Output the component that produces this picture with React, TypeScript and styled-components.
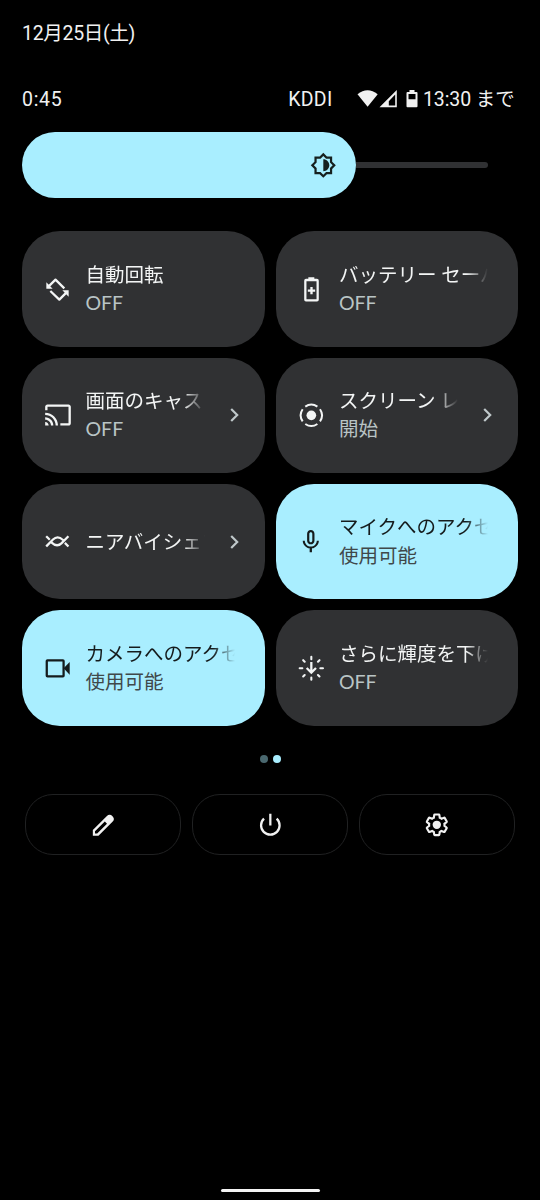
import React from 'react';
import styled, { createGlobalStyle } from 'styled-components';

const GlobalStyle = createGlobalStyle`
  * { box-sizing: border-box; }
  body { margin: 0; background: #000; }
`;

const Screen = styled.main`
  display: flex;
  flex-direction: column;
  width: 540px;
  height: 1200px;
  padding: 0 22px;
  overflow: hidden;
  background: #000;
  color: #f1f1f1;
  font-family: Roboto, 'Noto Sans CJK JP', sans-serif;
  font-size: 19.5px;
  line-height: 28px;
  white-space: nowrap;
`;

const DateLine = styled.div`
  margin-top: 20px;
  height: 28px;
  letter-spacing: -0.3px;
`;

const StatusBar = styled.div`
  display: flex;
  align-items: center;
  height: 28px;
  margin-top: 37px;
  padding-right: 4px;
`;

const Clock = styled.span`
  flex: 1;
  padding-top: 2px;
  letter-spacing: 0.7px;
`;

const Carrier = styled.span`
  margin-right: 24.5px;
  padding-top: 2px;
  letter-spacing: 0.3px;
`;

const StatusIcons = styled.svg`
  width: 62px;
  height: 20px;
  margin-right: 4px;
`;

const BatteryTime = styled.span`
  width: 91px;
  padding-top: 2px;
  letter-spacing: -0.1px;
`;

const Slider = styled.div`
  display: flex;
  align-items: center;
  height: 66px;
  margin-top: 19px;
  padding-right: 30px;
`;

const SliderFill = styled.div`
  display: flex;
  align-items: center;
  justify-content: flex-end;
  width: 334px;
  height: 66px;
  padding-right: 19px;
  border-radius: 33px;
  background: #a9eeff;
  color: #16201f;
`;

const SliderTrack = styled.div`
  flex: 1;
  height: 6px;
  border-radius: 0 3px 3px 0;
  background: #303133;
`;

const Tiles = styled.section`
  display: grid;
  grid-template-columns: repeat(2, minmax(0, 1fr));
  grid-auto-rows: 115.4px;
  gap: 11px;
  margin-top: 33.3px;
`;

const Tile = styled.div<{ $active?: boolean; $chevron?: boolean }>`
  display: flex;
  align-items: center;
  padding-left: 21.5px;
  padding-right: ${p => (p.$chevron ? 26 : 30)}px;
  border-radius: 38px;
  background: ${p => (p.$active ? '#a9eeff' : '#303133')};
  color: ${p => (p.$active ? '#151b1c' : '#f3f5f5')};
`;

const Labels = styled.div`
  flex: 1;
  min-width: 0;
  margin-left: 14px;
  padding-top: 2.6px;
`;

const Title = styled.div`
  overflow: hidden;
  line-height: 28.6px;
  mask-image: linear-gradient(to right, #000 calc(100% - 22px), transparent);
`;

const State = styled.div<{ $active?: boolean }>`
  margin-top: -1.2px;
  padding-bottom: 2.2px;
  color: ${p => (p.$active ? '#40484a' : '#b9c4c5')};
  font-family: Lato, 'Noto Sans CJK JP', sans-serif;
  line-height: 27.6px;
`;

const Chevron = styled.svg`
  width: 9px;
  height: 16px;
  margin-left: 25px;
  color: #bfc8ca;
`;

const Dots = styled.div`
  display: flex;
  justify-content: center;
  gap: 5px;
  margin-top: 28.7px;
`;

const Dot = styled.span<{ $on?: boolean }>`
  width: 8px;
  height: 8px;
  border-radius: 50%;
  background: ${p => (p.$on ? '#a9eeff' : '#4a686f')};
`;

const Actions = styled.footer`
  display: grid;
  grid-template-columns: repeat(3, 1fr);
  gap: 11px;
  margin: 31.9px 3px 0;
`;

const Action = styled.button`
  display: flex;
  align-items: center;
  justify-content: center;
  height: 61px;
  padding: 0;
  border: 1.4px solid #202122;
  border-radius: 28px;
  background: none;
  color: #f1f1f1;
`;

const HomeBar = styled.div`
  align-self: center;
  width: 99px;
  height: 3px;
  margin-top: auto;
  margin-bottom: 8.5px;
  border-radius: 2px;
  background: #f4f4f4;
`;

const IconSvg = styled.svg<{ $size: number }>`
  flex: none;
  width: ${p => p.$size}px;
  height: ${p => p.$size}px;
  margin: 0 ${p => (28 - p.$size) / 2}px;
`;

type Kids = { children: React.ReactNode };

/* Line icons share an 80-unit grid; solid icons use the 24-unit Material grid. */
const Line = ({ children }: Kids) => (
  <IconSvg $size={26.67} viewBox="0 0 80 80" fill="none" stroke="currentColor" strokeWidth="6.8">
    {children}
  </IconSvg>
);
const Solid = ({ size, children }: Kids & { size: number }) => (
  <IconSvg $size={size} viewBox="0 0 24 24" fill="currentColor">
    {children}
  </IconSvg>
);

const BrightnessIcon = () => (
  <Solid size={26.6}>
    <path d="M20 15.31 23.31 12 20 8.69V4h-4.69L12 .69 8.69 4H4v4.69L.69 12 4 15.31V20h4.69L12 23.31 15.31 20H20zM18 14.48V18h-3.52L12 20.48 9.52 18H6v-3.52L3.52 12 6 9.52V6h3.52L12 3.52 14.48 6H18v3.52L20.48 12z" fillRule="evenodd" />
    <path d="M12 6.6v10.8c2.98 0 5.4-2.42 5.4-5.4S14.98 6.6 12 6.6z" />
  </Solid>
);

const RotateIcon = () => (
  <Line>
    <path d="M14 31 34.5 11 61 37M19 45 46 71 67 50" strokeLinejoin="round" />
    <path d="M7 19v19h19zM74 62V43H55z" fill="currentColor" stroke="none" />
  </Line>
);

const BatteryIcon = () => (
  <Line>
    <rect x="22" y="12" width="37" height="61" rx="2" />
    <path d="M31 7.5h18M29.5 44h22M40.5 33v22" strokeWidth="7" />
  </Line>
);

const CastIcon = () => (
  <Solid size={28}>
    <path d="M21 3H3c-1.1 0-2 .9-2 2v3h2V5h18v14h-7v2h7c1.1 0 2-.9 2-2V5c0-1.1-.9-2-2-2zM1 18v3h3c0-1.66-1.34-3-3-3zm0-4v2c2.76 0 5 2.24 5 5h2c0-3.87-3.13-7-7-7zm0-4v2c4.97 0 9 4.03 9 9h2c0-6.08-4.93-11-11-11z" />
  </Solid>
);

const RecordIcon = () => (
  <Line>
    <circle cx="40" cy="40" r="14.5" fill="currentColor" stroke="none" />
    <path
      strokeWidth="6"
      d="M21.8 14A32 32 0 0 1 58.2 14M66 21.8A32 32 0 0 1 66 58.2M58.2 66A32 32 0 0 1 21.8 66M14 58.2A32 32 0 0 1 14 21.8"
    />
  </Line>
);

const NearbyIcon = () => (
  <Line>
    <path d="M9 53 27 34.5Q41 21 57 36M71 27 53 45.5Q39 59 23 44M9 27l6 6M71 53l-6-6" strokeLinecap="square" />
  </Line>
);

const MicIcon = () => (
  <Solid size={27.6}>
    <path fillRule="evenodd" d="M12 14.2c1.77 0 3.2-1.43 3.2-3.2V5c0-1.77-1.43-3.2-3.2-3.2S8.8 3.23 8.8 5v6c0 1.77 1.43 3.2 3.2 3.2zM10.7 4.9c0-.72.58-1.3 1.3-1.3s1.3.58 1.3 1.3v6.2c0 .72-.58 1.3-1.3 1.3s-1.3-.58-1.3-1.3z" />
    <path d="M17.2 11c0 3-2.44 5.1-5.2 5.1S6.8 14 6.8 11H5c0 3.41 2.72 6.23 6 6.72V21h2v-3.28c3.28-.49 6-3.31 6-6.72z" />
  </Solid>
);

const CameraIcon = () => (
  <Line>
    <rect x="8.3" y="15.8" width="50.5" height="48.5" rx="2" />
    <path d="M59 40 77 21v38z" fill="currentColor" stroke="none" />
  </Line>
);

const DimIcon = () => (
  <Line>
    <path d="M40 21v31M26 39l14 14 14-14" />
    <path
      strokeLinecap="round"
      strokeWidth="6.2"
      d="M40 5.5v7M40 67.5v7M5 40h8M67 40h8M15.6 15.6l4.4 4.4M60 60l4.4 4.4M15.6 64.4 20 60M60 20l4.4-4.4"
    />
  </Line>
);

const EditIcon = () => (
  <Line>
    <path
      fill="currentColor"
      stroke="none"
      fillRule="evenodd"
      d="M8.5 54 50 12.5Q59 4 67.5 12.5T67.5 29L25.5 71H8.5zM15 57.5V64.5h6.5L51 35 44.5 28.5z"
    />
  </Line>
);

const PowerIcon = () => (
  <Line>
    <path d="M21 20A27.8 27.8 0 1 0 59 20M40 5.5v35" />
  </Line>
);

const GearIcon = () => (
  <Solid size={27.6}>
    <g transform="translate(12 12) scale(.93) translate(-12 -12)">
      <path
        fill="none"
        stroke="currentColor"
        strokeWidth="2"
        d="M19.14 12.94c.04-.3.06-.61.06-.94 0-.32-.02-.64-.07-.94l2.03-1.58c.18-.14.23-.41.12-.61l-1.92-3.32c-.12-.22-.37-.29-.59-.22l-2.39.96c-.5-.38-1.03-.7-1.62-.94l-.36-2.54c-.04-.24-.24-.41-.48-.41h-3.84c-.24 0-.43.17-.47.41l-.36 2.54c-.59.24-1.13.57-1.62.94l-2.39-.96c-.22-.08-.47 0-.59.22L2.74 8.87c-.12.21-.08.47.12.61l2.03 1.58c-.05.3-.09.63-.09.94s.02.64.07.94l-2.03 1.58c-.18.14-.23.41-.12.61l1.92 3.32c.12.22.37.29.59.22l2.39-.96c.5.38 1.03.7 1.62.94l.36 2.54c.05.24.24.41.48.41h3.84c.24 0 .44-.17.47-.41l.36-2.54c.59-.24 1.13-.56 1.62-.94l2.39.96c.22.08.47 0 .59-.22l1.92-3.32c.12-.22.07-.47-.12-.61z"
      />
      <circle cx="12" cy="12" r="3.9" />
    </g>
  </Solid>
);

type TileData = { icon: React.ReactNode; title: string; state?: string; active?: boolean; chevron?: boolean };

const tiles: TileData[] = [
  { icon: <RotateIcon />, title: '自動回転', state: 'OFF' },
  { icon: <BatteryIcon />, title: 'バッテリー セーバー', state: 'OFF' },
  { icon: <CastIcon />, title: '画面のキャスト', state: 'OFF', chevron: true },
  { icon: <RecordIcon />, title: 'スクリーン レコード', state: '開始', chevron: true },
  { icon: <NearbyIcon />, title: 'ニアバイシェア', chevron: true },
  { icon: <MicIcon />, title: 'マイクへのアクセス', state: '使用可能', active: true },
  { icon: <CameraIcon />, title: 'カメラへのアクセス', state: '使用可能', active: true },
  { icon: <DimIcon />, title: 'さらに輝度を下げる', state: 'OFF' },
];

export default function App() {
  return (
    <>
      <GlobalStyle />
      <Screen>
        <DateLine>12月25日(土)</DateLine>
        <StatusBar>
          <Clock>0:45</Clock>
          <Carrier>KDDI</Carrier>
          <StatusIcons viewBox="0 0 62 20" fill="#f1f1f1">
            <path d="M.5 5.2Q10.5-2.8 20.7 5.2L10.6 17.8z" />
            <path fillRule="evenodd" d="M22.5 18.3 39.8 1v17.3zM31.8 16.5h6.4V5.6l-6.4 6.6z" />
            <path fillRule="evenodd" d="M52.5 1h5v2h2q1 0 1 1v13.3q0 1-1 1h-9q-1 0-1-1V4q0-1 1-1h2zM51.5 5v5.3h7V5z" />
          </StatusIcons>
          <BatteryTime>13:30 まで</BatteryTime>
        </StatusBar>
        <Slider>
          <SliderFill>
            <BrightnessIcon />
          </SliderFill>
          <SliderTrack />
        </Slider>
        <Tiles>
          {tiles.map(t => (
            <Tile key={t.title} $active={t.active} $chevron={t.chevron}>
              {t.icon}
              <Labels>
                <Title>{t.title}</Title>
                {t.state && <State $active={t.active}>{t.state}</State>}
              </Labels>
              {t.chevron && (
                <Chevron viewBox="0 0 9 16" fill="none" stroke="currentColor" strokeWidth="2.2">
                  <path d="M1.2 2 7.2 8l-6 6" />
                </Chevron>
              )}
            </Tile>
          ))}
        </Tiles>
        <Dots>
          <Dot />
          <Dot $on />
        </Dots>
        <Actions>
          <Action aria-label="編集"><EditIcon /></Action>
          <Action aria-label="電源"><PowerIcon /></Action>
          <Action aria-label="設定"><GearIcon /></Action>
        </Actions>
        <HomeBar />
      </Screen>
    </>
  );
}
